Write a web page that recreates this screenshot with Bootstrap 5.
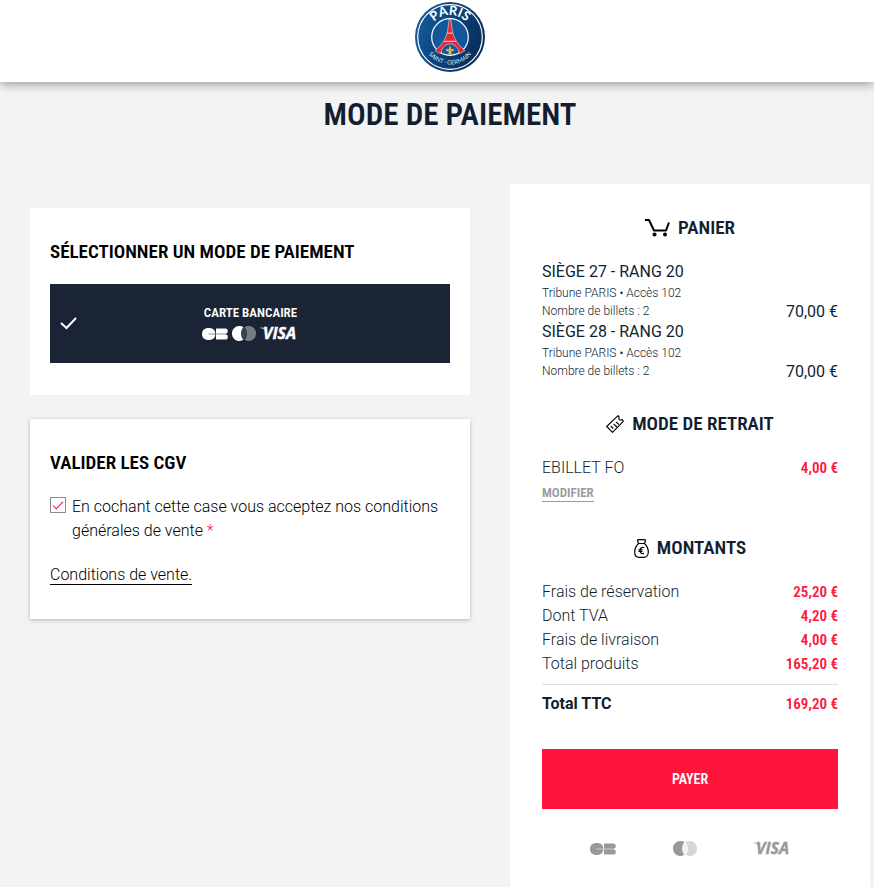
<!DOCTYPE html>
<html lang="fr">
<head>
<meta charset="utf-8">
<meta name="viewport" content="width=device-width, initial-scale=1">
<title>Mode de paiement</title>
<link rel="stylesheet" href="https://cdn.jsdelivr.net/npm/bootstrap@5.3.0/dist/css/bootstrap.min.css">
<style>
  :root { --navy: #1b2434; --ink: #121e30; --rouge: #ff143c; --prix: #e3173e; }
  body { background: #f3f3f3; color: #000; font-family: Roboto, "Liberation Sans", sans-serif; font-size: 16px; font-weight: 300; line-height: 24px; }
  .site-head { padding: 2px 0 10px 26px; box-shadow: 0 2px 10px rgba(0,0,0,.4); }
  .site-main { padding: 0 4px 0 30px; }
  .cond { font-family: "Roboto Condensed", "Liberation Sans Narrow", sans-serif; font-weight: 600; }
  .page-title { font-size: 31px; line-height: 36px; color: var(--ink); padding: 15px 0 51px; margin: 0; }
  .pay-grid { display: grid; grid-template-columns: 11fr 9fr; column-gap: 40px; min-height: 703px; }
  .box { padding: 32px 20px; }
  .box-title { font-size: 19px; line-height: 24px; margin: 0 0 20px; }
  .cgv { box-shadow: 0 1px 4px rgba(0,0,0,.25); }
  .method { background: var(--navy); padding: 18px 10px 19px; font-size: 13px; line-height: 21px; }
  .marks { height: 21px; }
  .tick { appearance: none; width: 16px; height: 16px; margin: 2px 6px 0 0; border: 1px solid #8a8a8a; flex: none; background: #fff; display: grid; place-items: center; }
  .tick:checked::before { content: ""; width: 10px; height: 5px; border: solid var(--prix); border-width: 0 0 1px 1px; transform: rotate(-45deg) translate(1px, -1px); }
  .required-mark { color: var(--rouge); }
  .sales-link { color: #000; text-decoration: none; border-bottom: 1px solid #000; line-height: 18px; }
  .summary { padding: 32px; color: var(--ink); }
  .sum-title { font-size: 19px; line-height: 24px; margin: 32px 0 20px; }
  .sum-title:first-child { margin-top: 0; }
  .seat { font-weight: 400; }
  .seat small { display: block; font-size: 12px; line-height: 18px; font-weight: 300; }
  .seat-price { line-height: 16px; }
  .price { color: var(--rouge); font-size: 15px; }
  .edit { color: #999; font-size: 13px; line-height: 17px; text-decoration: none; border-bottom: 1px solid #999; }
  .total { border-top: 1px solid #e0e0e0; margin-top: 8px; padding-top: 7px; }
  .btn-payer { --bs-btn-bg: var(--rouge); --bs-btn-hover-bg: #d90f32; --bs-btn-color: #fff; --bs-btn-hover-color: #fff; --bs-btn-border-width: 0; border-radius: 0; height: 60px; font-size: 14px; margin: 33px 0 32px; }
  .grey-marks { color: #999; padding: 0 46px 0 48px; }
  .visa-text { font: italic 700 16px "Open Sans", sans-serif; }
</style>
<script src="https://cdn.jsdelivr.net/npm/bootstrap@5.3.0/dist/js/bootstrap.bundle.min.js"></script>
</head>
<body>
<svg class="d-none" aria-hidden="true">
  <symbol id="cb" viewBox="0 0 26 12"><path fill="currentColor" d="M6.500 0C8 0 10 .2 11.300 1.200C12.600 2.200 13.300 3.600 13.300 5.700H6.500V6.300H13.300C13.300 8.400 12.600 9.800 11.300 10.800C10 11.800 8 12 6.500 12C2.500 12 0 9.700 0 6S2.500 0 6.500 0ZM14 .5H23.200A2.600 2.600 0 0 1 23.200 5.700H14ZM14 6.300H23.200A2.600 2.600 0 0 1 23.200 11.500H14Z"/></symbol>
  <symbol id="mc" viewBox="0 0 24 15"><path fill="currentColor" d="M11.500 1.200A7.500 7.500 0 1 0 11.500 13.800C8.300 10.500 8.300 4.500 11.500 1.200Z"/><path fill="currentColor" opacity=".4" d="M12.500 1.200A7.500 7.500 0 1 1 12.500 13.800C15.700 10.500 15.700 4.500 12.500 1.200Z"/><path fill="currentColor" opacity=".15" d="M12 1.500C15 5 15 10 12 13.500C9 10 9 5 12 1.500Z"/></symbol>
  <symbol id="visa" viewBox="0 0 39 15"><path fill="currentColor" d="M0 1.500H4.500Q6.200 1.500 6.500 4L7.300 7Q5 3 0 2Z" opacity=".6"/><text class="visa-text" x="3" y="13" fill="currentColor" stroke="currentColor" stroke-width=".4">VISA</text></symbol>
</svg>

<header class="site-head bg-white d-flex justify-content-center position-relative">
  <a href="#" aria-label="Paris Saint-Germain" class="d-block lh-1">
    <svg width="70" height="70" viewBox="0 0 70 70" class="d-block">
      <defs>
        <linearGradient id="disc" x1="0" x2="1" y2=".4"><stop offset="0" stop-color="#1a5f9e"/><stop offset=".5" stop-color="#0c4680"/><stop offset="1" stop-color="#092f60"/></linearGradient>
        <path id="arcTop" d="M13 35A22 22 0 0 1 57 35"/>
        <path id="arcBottom" d="M7.500 35A27.500 27.500 0 0 0 62.500 35"/>
      </defs>
      <circle cx="35" cy="35" r="35" fill="url(#disc)"/>
      <circle cx="35" cy="35" r="32.300" fill="none" stroke="#fff" stroke-width="1.200"/>
      <circle cx="35" cy="35" r="18.300" fill="#10589b" stroke="#fff" stroke-width="1.200"/>
      <path fill="#e02a36" stroke="#fff" stroke-width=".5" d="M34.200 17H35.800L37.200 27.500C38.500 36 42.500 42.500 50 48.500L46.500 51H44C43.500 45.500 39.500 42 35 42S26.500 45.500 26 51H23.500L20 48.500C27.500 42.500 31.500 36 32.800 27.500Z"/>
      <path d="M32.300 31.200H37.700M29 39.300H41" stroke="#fff" stroke-width=".8"/>
      <path fill="#e0b548" d="M35 43.800C36.600 46 36.200 47.400 35.600 48.800C36.200 46.500 38.500 46 39 48.200C38.500 49.300 37.300 49.600 36 49.600L36.800 52L35 53L33.200 52L34 49.600C32.700 49.600 31.500 49.300 31 48.200C31.500 46 33.800 46.500 34.400 48.800C33.800 47.400 33.400 46 35 43.800Z"/>
      <text fill="#fff" font-family="Lato, sans-serif" font-weight="700" font-size="13" text-anchor="middle"><textPath href="#arcTop" startOffset="50%">PARIS</textPath></text>
      <text fill="#dce8f4" font-family="Lato, sans-serif" font-weight="400" font-size="6" text-anchor="middle"><textPath href="#arcBottom" startOffset="50%">SAINT · GERMAIN</textPath></text>
    </svg>
  </a>
</header>

<main class="site-main">
  <h1 class="page-title cond text-center">MODE DE PAIEMENT</h1>
  <div class="pay-grid">
    <div class="d-flex flex-column gap-4 pt-4">
      <section class="box bg-white">
        <h2 class="box-title cond">SÉLECTIONNER UN MODE DE PAIEMENT</h2>
        <button type="button" class="method cond w-100 border-0 text-white d-flex align-items-center">
          <svg width="17" height="13" viewBox="0 0 17 13" fill="none" stroke="#fff" stroke-width="2" aria-hidden="true"><path d="M1 6L6.500 11L16 1"/></svg>
          <span class="flex-fill pe-3">
            <span class="d-block">CARTE BANCAIRE</span>
            <span class="marks d-flex justify-content-center align-items-center gap-1">
              <svg width="26" height="12" role="img" aria-label="CB"><use href="#cb"/></svg>
              <svg width="24" height="15" role="img" aria-label="Mastercard"><use href="#mc"/></svg>
              <svg width="39" height="15" role="img" aria-label="Visa"><use href="#visa"/></svg>
            </span>
          </span>
        </button>
      </section>
      <section class="box cgv bg-white">
        <h2 class="box-title cond">VALIDER LES CGV</h2>
        <div class="d-flex mb-3 pb-1">
          <input class="tick" type="checkbox" id="cgv" checked>
          <label for="cgv">En cochant cette case vous acceptez nos conditions générales de vente <span class="required-mark">*</span></label>
        </div>
        <a href="#" class="sales-link d-inline-block">Conditions de vente.</a>
      </section>
    </div>

    <aside class="summary bg-white">
      <h2 class="sum-title cond d-flex justify-content-center align-items-center gap-2">
        <svg width="25" height="18" viewBox="0 0 25 18" fill="none" stroke="#000" stroke-width="2" aria-hidden="true"><path d="M0 1H4L9 11.500H21L24 3.500" stroke-linejoin="round"/><circle cx="9.500" cy="15.500" r="2" fill="#000" stroke="none"/><circle cx="20" cy="15.500" r="2" fill="#000" stroke="none"/></svg>
        PANIER
      </h2>
      <div class="seat d-flex justify-content-between align-items-end">
        <div>SIÈGE 27 - RANG 20<small>Tribune PARIS • Accès 102</small><small>Nombre de billets : 2</small></div>
        <span class="seat-price">70,00 €</span>
      </div>
      <div class="seat d-flex justify-content-between align-items-end">
        <div>SIÈGE 28 - RANG 20<small>Tribune PARIS • Accès 102</small><small>Nombre de billets : 2</small></div>
        <span class="seat-price">70,00 €</span>
      </div>

      <h2 class="sum-title cond d-flex justify-content-center align-items-center gap-2">
        <svg width="18" height="18" viewBox="0 0 18 18" fill="none" stroke="#000" stroke-width="1.100" stroke-linejoin="round" aria-hidden="true"><path d="M.7 11.500L12 .7L13.200 2.200Q12.300 3.800 13.500 4.800Q14.700 5.500 16 4.300L17.300 6.400L6.500 17.300Z"/><path d="M4.800 11L7.300 13.500M7.500 8.800L11 12M9.800 6.800L13 9.500"/></svg>
        MODE DE RETRAIT
      </h2>
      <div class="d-flex justify-content-between"><span>EBILLET FO</span><span class="price cond">4,00 €</span></div>
      <div><a href="#" class="edit cond d-inline-block">MODIFIER</a></div>

      <h2 class="sum-title cond d-flex justify-content-center align-items-center gap-2">
        <svg width="15" height="19" viewBox="0 0 15 19" fill="none" stroke="#000" stroke-width="1.200" stroke-linejoin="round" aria-hidden="true"><path d="M4.500 4.500L3.500 1.500Q3.500 .7 5 .7H10Q11.500 .7 11.500 1.500L10.500 4.500ZM4.500 4.500C2 7 .7 10 .7 13C.7 16.500 2.500 18.300 5 18.300H10C12.500 18.300 14.300 16.500 14.300 13C14.300 10 13 7 10.500 4.500"/><path d="M10 8.800Q8.500 7.800 7 9Q6 10 6 11.500T7 14Q8.500 15.200 10 14.200M4.500 10.800H8.500M4.500 12.500H8.500"/></svg>
        MONTANTS
      </h2>
      <div class="d-flex justify-content-between"><span>Frais de réservation</span><span class="price cond">25,20 €</span></div>
      <div class="d-flex justify-content-between"><span>Dont TVA</span><span class="price cond">4,20 €</span></div>
      <div class="d-flex justify-content-between"><span>Frais de livraison</span><span class="price cond">4,00 €</span></div>
      <div class="d-flex justify-content-between"><span>Total produits</span><span class="price cond">165,20 €</span></div>
      <div class="total d-flex justify-content-between"><span class="fw-bold">Total TTC</span><span class="price cond">169,20 €</span></div>

      <button type="button" class="btn btn-payer cond w-100">PAYER</button>
      <div class="grey-marks d-flex justify-content-between align-items-center">
        <svg width="26" height="12" role="img" aria-label="CB"><use href="#cb"/></svg>
        <svg width="24" height="15" role="img" aria-label="Mastercard"><use href="#mc"/></svg>
        <svg width="39" height="15" role="img" aria-label="Visa"><use href="#visa"/></svg>
      </div>
    </aside>
  </div>
</main>
</body>
</html>
